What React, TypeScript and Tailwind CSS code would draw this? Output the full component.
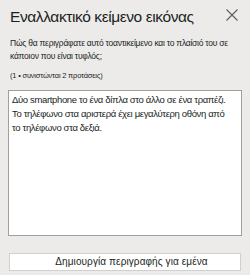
const AltTextPane = () => {
  const font = { fontFamily: '"Liberation Sans", "Noto Sans", sans-serif' };

  return (
    <div className="w-[250px] h-[275px] bg-[#edebe9] text-[#201f1e] flex flex-col" style={font}>
      {/* Header */}
      <div className="flex items-start justify-between pl-[10px] pr-[12px] pt-[6px]">
        <h1 className="text-[15.5px] leading-[22px] font-normal tracking-[-0.4px] whitespace-nowrap">Εναλλακτικό κείμενο εικόνας</h1>
        <button className="mt-[2px] w-[13px] h-[13px] flex items-center justify-center">
          <svg width="12" height="12" viewBox="0 0 12 12">
            <path d="M0.5 0.5 L11.5 11.5 M11.5 0.5 L0.5 11.5" stroke="#605e5c" strokeWidth="1.1" fill="none" />
          </svg>
        </button>
      </div>

      {/* Description */}
      <div className="px-[10px] mt-[9px]">
        <p className="text-[8.5px] leading-[13px] tracking-[-0.25px] whitespace-nowrap">
          Πώς θα περιγράφατε αυτό τοαντικείμενο και το πλαίσιό του σε
          <br />
          κάποιον που είναι τυφλός;
        </p>
        <p className="text-[7.5px] leading-[12px] tracking-[-0.2px] mt-[7px]">(1 • συνιστώνται 2 προτάσεις)</p>
      </div>

      {/* Text area */}
      <div className="mx-[8px] mt-[8px] h-[146px] bg-white border border-[#a19f9d] px-[3px] pt-[2px]">
        <p className="text-[9.5px] leading-[14px] tracking-[-0.35px] whitespace-nowrap">
          Δύο smartphone το ένα δίπλα στο άλλο σε ένα τραπέζι.
          <br />
          Το τηλέφωνο στα αριστερά έχει μεγαλύτερη οθόνη από
          <br />
          το τηλέφωνο στα δεξιά.
        </p>
      </div>

      {/* Generate button */}
      <div className="px-[9px] mt-[12px]">
        <button className="w-full h-[18px] bg-white border border-[#d2d0ce] pl-[13px] text-[10px] leading-[16px] tracking-[0.1px]">
          Δημιουργία περιγραφής για εμένα
        </button>
      </div>
    </div>
  );
};

export default function App() {
  return <AltTextPane />;
}
